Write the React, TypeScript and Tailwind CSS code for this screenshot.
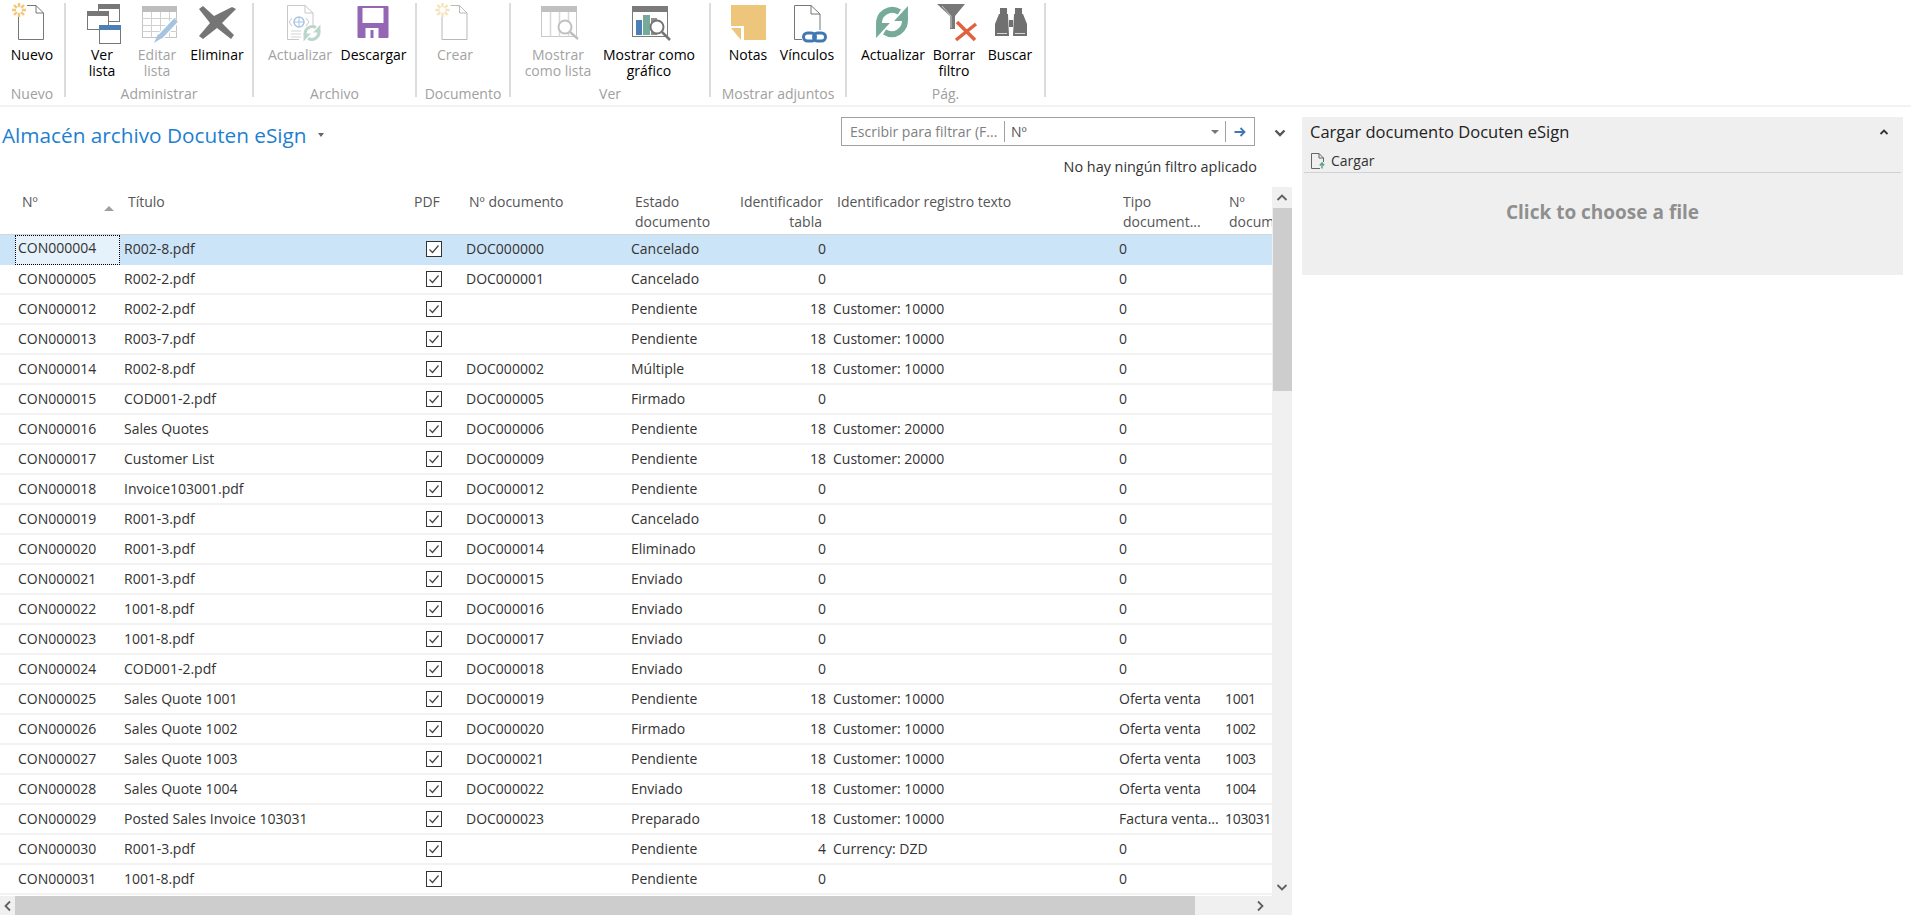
import type { ReactNode } from "react";

const rows: [string, string, string, string, string, string, string, string][] = [
  ["CON000004", "R002-8.pdf", "DOC000000", "Cancelado", "0", "", "0", ""],
  ["CON000005", "R002-2.pdf", "DOC000001", "Cancelado", "0", "", "0", ""],
  ["CON000012", "R002-2.pdf", "", "Pendiente", "18", "Customer: 10000", "0", ""],
  ["CON000013", "R003-7.pdf", "", "Pendiente", "18", "Customer: 10000", "0", ""],
  ["CON000014", "R002-8.pdf", "DOC000002", "Múltiple", "18", "Customer: 10000", "0", ""],
  ["CON000015", "COD001-2.pdf", "DOC000005", "Firmado", "0", "", "0", ""],
  ["CON000016", "Sales Quotes", "DOC000006", "Pendiente", "18", "Customer: 20000", "0", ""],
  ["CON000017", "Customer List", "DOC000009", "Pendiente", "18", "Customer: 20000", "0", ""],
  ["CON000018", "Invoice103001.pdf", "DOC000012", "Pendiente", "0", "", "0", ""],
  ["CON000019", "R001-3.pdf", "DOC000013", "Cancelado", "0", "", "0", ""],
  ["CON000020", "R001-3.pdf", "DOC000014", "Eliminado", "0", "", "0", ""],
  ["CON000021", "R001-3.pdf", "DOC000015", "Enviado", "0", "", "0", ""],
  ["CON000022", "1001-8.pdf", "DOC000016", "Enviado", "0", "", "0", ""],
  ["CON000023", "1001-8.pdf", "DOC000017", "Enviado", "0", "", "0", ""],
  ["CON000024", "COD001-2.pdf", "DOC000018", "Enviado", "0", "", "0", ""],
  ["CON000025", "Sales Quote 1001", "DOC000019", "Pendiente", "18", "Customer: 10000", "Oferta venta", "1001"],
  ["CON000026", "Sales Quote 1002", "DOC000020", "Firmado", "18", "Customer: 10000", "Oferta venta", "1002"],
  ["CON000027", "Sales Quote 1003", "DOC000021", "Pendiente", "18", "Customer: 10000", "Oferta venta", "1003"],
  ["CON000028", "Sales Quote 1004", "DOC000022", "Enviado", "18", "Customer: 10000", "Oferta venta", "1004"],
  ["CON000029", "Posted Sales Invoice 103031", "DOC000023", "Preparado", "18", "Customer: 10000", "Factura venta...", "103031"],
  ["CON000030", "R001-3.pdf", "", "Pendiente", "4", "Currency: DZD", "0", ""],
  ["CON000031", "1001-8.pdf", "", "Pendiente", "0", "", "0", ""],
];

const cols = "grid grid-cols-[120px_290px_52px_165px_113px_89px_286px_107px_50px]";

// every ribbon icon is drawn in page coordinates, the viewBox picks the window
function Sync({ cx, cy, r, color }: { cx: number; cy: number; r: number; color: string }) {
  const arm = (
    <>
      <path d="M-12 3 A12.5 12.5 0 0 1 7 -9.5" fill="none" stroke={color} strokeWidth="5.5" />
      <polygon points="15,-15 15,-1 2,-1" fill={color} />
    </>
  );
  return (
    <g transform={`translate(${cx} ${cy}) scale(${r / 16})`}>
      {arm}
      <g transform="rotate(180)">{arm}</g>
    </g>
  );
}

function NewPage({ dx = 0 }: { dx?: number }) {
  return (
    <g transform={`translate(${dx} 0)`}>
      <path d="M27 5.5 H36 L43.5 13 V39.5 H18.5 V17" fill="none" stroke="#777" strokeWidth="1" />
      <path d="M36 5.5 V13 H43.5" fill="none" stroke="#777" strokeWidth="1" />
      <path d="M19 3 V17 M12 10 H26 M14 5 L24 15 M24 5 L14 15" stroke="#f3c67a" strokeWidth="2.4" />
      <circle cx="19" cy="10" r="3" fill="#fff" />
    </g>
  );
}

function Win({ x, y, w, h, head }: { x: number; y: number; w: number; h: number; head: string }) {
  return (
    <>
      <rect x={x + 0.5} y={y + 0.5} width={w} height={h} fill="#fff" stroke="#777" />
      <rect x={x} y={y} width={w + 1} height="5" fill={head} />
    </>
  );
}

function RibbonButton({ w, label, off, children }: { w: number; label: ReactNode; off?: boolean; children: ReactNode }) {
  return (
    <div className="flex flex-col items-center shrink-0" style={{ width: w }}>
      {children}
      <div className={`mt-px text-center text-[14px] leading-4 whitespace-nowrap ${off ? "text-[#a3a3a3]" : "text-black"}`}>
        {label}
      </div>
    </div>
  );
}

function Group({ w, label, lead = 0, children }: { w: number; label: string; lead?: number; children: ReactNode }) {
  return (
    <div className="h-[94px] shrink-0 border-r-2 border-[#dcdcdc]" style={{ width: w }}>
      <div className="flex h-[83px]" style={{ paddingLeft: lead }}>
        {children}
      </div>
      <div className="text-center text-[14px] leading-4 text-[#a0a0a0] whitespace-nowrap">{label}</div>
    </div>
  );
}

const iconBox = "w-[48px] h-[43px] shrink-0 overflow-visible";

function Ribbon() {
  return (
    <div className="flex h-[107px] pt-[3px] border-b-2 border-[#f3f3f3] box-border">
      <Group w={66} label="Nuevo">
        <RibbonButton w={64} label="Nuevo">
          <svg className={iconBox} viewBox="8 3 48 43">
            <NewPage />
          </svg>
        </RibbonButton>
      </Group>
      <Group w={188} label="Administrar" lead={6}>
        <RibbonButton w={60} label={<>Ver<br />lista</>}>
          <svg className={iconBox} viewBox="78 3 48 43">
            <Win x={98} y={4} w={21} h={17} head="#777" />
            <Win x={87} y={11} w={21} h={18} head="#777" />
            <Win x={99} y={25} w={21} h={18} head="#4c7fb5" />
          </svg>
        </RibbonButton>
        <RibbonButton w={50} off label={<>Editar<br />lista</>}>
          <svg className={iconBox} viewBox="133 3 48 43">
            <rect x="142.5" y="6.5" width="34" height="31" fill="#fff" stroke="#c4c4c4" />
            <rect x="142" y="6" width="35" height="6" fill="#bdbdbd" />
            <path d="M142 18.5 H177 M142 25.5 H177 M142 31.5 H177 M151.5 12 V38 M160.5 12 V38 M169.5 12 V38" stroke="#d0d0d0" />
            <path d="M160 37 L176 20" stroke="#fff" strokeWidth="8" />
            <path d="M160 37 L176 20" stroke="#a5c4e2" strokeWidth="5" />
            <polygon points="154,43 158,34 162,38" fill="#a5c4e2" />
          </svg>
        </RibbonButton>
        <RibbonButton w={70} label="Eliminar">
          <svg className={iconBox} viewBox="193 3 48 43">
            <polygon points="199,9 203,6 214,16 232,7 236,9 222,23 234,35 231,39 217,28 203,39 199,36 210,23" fill="#757575" />
          </svg>
        </RibbonButton>
      </Group>
      <Group w={163} label="Archivo" lead={6}>
        <RibbonButton w={80} off label="Actualizar">
          <svg className={iconBox} viewBox="276 3 48 43">
            <path d="M287.5 5.5 H305 L313 13 V26 M305 5.5 V13 H313 M299 39.5 H287.5 V5.5" fill="none" stroke="#c8c8c8" />
            <circle cx="299" cy="22" r="5" fill="none" stroke="#a9c4e4" strokeWidth="1.5" />
            <path d="M294 22 H304 M299 17 V27" stroke="#a9c4e4" />
            <path d="M292 18 L289 22 L292 26 M306 18 L309 22 L306 26" fill="none" stroke="#c8c8c8" />
            <path d="M291 31 H301 M291 34 H301 M291 37 H301" stroke="#d4d4d4" />
            <Sync cx={312} cy={33} r={9} color="#bcd6cb" />
          </svg>
        </RibbonButton>
        <RibbonButton w={67} label="Descargar">
          <svg className={iconBox} viewBox="349.5 3 48 43">
            <rect x="357" y="6" width="31" height="32" rx="1" fill="#9466b4" />
            <rect x="362" y="8" width="21" height="15" fill="#fff" />
            <rect x="365" y="28" width="13" height="10" fill="#fff" />
            <rect x="370" y="30" width="3" height="8" fill="#9466b4" />
          </svg>
        </RibbonButton>
      </Group>
      <Group w={94} label="Documento">
        <RibbonButton w={76} off label="Crear">
          <svg className={`${iconBox} opacity-50`} viewBox="431 3 48 43">
            <NewPage dx={423.5} />
          </svg>
        </RibbonButton>
      </Group>
      <Group w={200} label="Ver">
        <RibbonButton w={94} off label={<>Mostrar<br />como lista</>}>
          <svg className={iconBox} viewBox="534 3 48 43">
            <rect x="541.5" y="6.5" width="35" height="30" fill="#fff" stroke="#c8c8c8" />
            <rect x="541" y="6" width="36" height="6" fill="#c0c0c0" />
            <path d="M550.5 12 V37 M559.5 12 V37 M568.5 12 V37" stroke="#d8d8d8" strokeWidth="1.5" />
            <circle cx="565" cy="27" r="6.5" fill="#fff" stroke="#c0c0c0" strokeWidth="2" />
            <path d="M570 32 L578 39" stroke="#c0c0c0" strokeWidth="2.5" />
          </svg>
        </RibbonButton>
        <RibbonButton w={88} label={<>Mostrar como<br />gráfico</>}>
          <svg className={iconBox} viewBox="625 3 48 43">
            <rect x="632.5" y="6.5" width="35" height="30" fill="#fff" stroke="#7b7b7b" />
            <rect x="632" y="6" width="36" height="6" fill="#7b7b7b" />
            <rect x="636" y="20" width="6" height="15" fill="#4c7fb5" />
            <rect x="643" y="15" width="7" height="20" fill="#75ab98" />
            <rect x="651" y="18" width="6" height="17" fill="#909090" />
            <circle cx="657" cy="27" r="6.5" fill="#fff" stroke="#757575" strokeWidth="2" />
            <path d="M662 32 L670 40" stroke="#757575" strokeWidth="2.5" />
          </svg>
        </RibbonButton>
      </Group>
      <Group w={136} label="Mostrar adjuntos" lead={9}>
        <RibbonButton w={56} label="Notas">
          <svg className={iconBox} viewBox="724 3 48 43">
            <polygon points="731,5 766,5 766,40 744,40 744,26 731,26" fill="#edc67c" />
            <path d="M731 27 H743 V40" fill="none" stroke="#fff" strokeWidth="1" />
            <polygon points="731,28 741,28 741,40" fill="#edc67c" />
          </svg>
        </RibbonButton>
        <RibbonButton w={62} label="Vínculos">
          <svg className={iconBox} viewBox="783 3 48 43">
            <path d="M794.5 39.5 V5.5 H811 L820 14 V30 M811 5.5 V14 H820 M794.5 39.5 H802" fill="none" stroke="#777" />
            <rect x="803.5" y="33" width="12" height="8" rx="4" fill="none" stroke="#3f78b3" strokeWidth="3" />
            <rect x="813.5" y="33" width="12" height="8" rx="4" fill="none" stroke="#3f78b3" strokeWidth="3" />
          </svg>
        </RibbonButton>
      </Group>
      <Group w={199} label="Pág." lead={6}>
        <RibbonButton w={80} label="Actualizar">
          <svg className={iconBox} viewBox="869 3 48 43">
            <Sync cx={892} cy={22} r={17} color="#75ab98" />
          </svg>
        </RibbonButton>
        <RibbonButton w={42} label={<>Borrar<br />filtro</>}>
          <svg className={iconBox} viewBox="930 3 48 43">
            <polygon points="937,4 965,4 955,16 955,29 950,29 950,16" fill="#787878" />
            <path d="M942 6 L951 16 V28" fill="none" stroke="#c9c9c9" />
            <path d="M957 22 L975 40 M976 24 L956 40" stroke="#e0603f" strokeWidth="3.5" />
          </svg>
        </RibbonButton>
        <RibbonButton w={70} label="Buscar">
          <svg className={iconBox} viewBox="986 3 48 43">
            <rect x="1000" y="8" width="7" height="6" fill="#707070" />
            <rect x="1015" y="8" width="7" height="6" fill="#707070" />
            <polygon points="999,14 1008,14 1009,36 995,36 995,24" fill="#707070" />
            <polygon points="1014,14 1023,14 1027,24 1027,36 1013,36" fill="#707070" />
            <rect x="1009" y="20" width="4" height="7" fill="#707070" />
            <path d="M997 33.5 H1007 M1015 33.5 H1025" stroke="#d8d8d8" />
          </svg>
        </RibbonButton>
      </Group>
    </div>
  );
}

function Checked() {
  return (
    <svg width="16" height="16" viewBox="0 0 16 16" className="block">
      <rect x="0.5" y="0.5" width="15" height="15" fill="#fff" stroke="#333" />
      <path d="M3.5 8.5 L6.5 11.5 L12.5 4.5" fill="none" stroke="#444" strokeWidth="1.2" />
    </svg>
  );
}

function Header() {
  return (
    <div className={`${cols} h-[48px] box-border border-b border-[#d6d6d6] text-[14px] leading-5 text-[#555] pt-[5px]`}>
      <div className="relative pl-[22px]">
        Nº
        <span className="absolute left-[104px] top-[14px] w-0 h-0 border-x-[5px] border-x-transparent border-b-[5px] border-b-[#a0a0a0]" />
      </div>
      <div className="pl-[8px]">Título</div>
      <div className="pl-[4px]">PDF</div>
      <div className="pl-[7px]">Nº documento</div>
      <div className="pl-[8px]">Estado<br />documento</div>
      <div className="text-right pr-[7px]">Identificador<br />tabla</div>
      <div className="pl-[8px]">Identificador registro texto</div>
      <div className="pl-[8px]">Tipo<br />document...</div>
      <div className="pl-[7px] overflow-hidden whitespace-nowrap">Nº<br />documento</div>
    </div>
  );
}

function Grid() {
  return (
    <div className="w-[1272px] shrink-0 overflow-hidden">
      <Header />
      {rows.map((r, i) => (
        <div
          key={r[0]}
          className={`${cols} h-[30px] box-border items-center text-[14px] text-[#333] ${i === 0 ? "grid-rows-[26px] bg-[#cce4f7] pb-[4px]" : "grid-rows-[26px] border-b-2 border-[#f2f2f2] pb-[2px]"}`}
        >
          {i === 0 ? (
            <div className="ml-[15px] self-start h-[30px] box-border border border-dotted border-black bg-[#e5f1fb] pl-[2px] leading-[24px]">{r[0]}</div>
          ) : (
            <div className="pl-[18px]">{r[0]}</div>
          )}
          <div className="pl-[4px] whitespace-nowrap">{r[1]}</div>
          <div className="pl-[16px] mt-[2px]">
            <Checked />
          </div>
          <div className="pl-[4px]">{r[2]}</div>
          <div className="pl-[4px]">{r[3]}</div>
          <div className="text-right pr-[3px]">{r[4]}</div>
          <div className="pl-[4px]">{r[5]}</div>
          <div className="pl-[4px] whitespace-nowrap">{r[6]}</div>
          <div className="pl-[3px] tracking-[-0.3px] overflow-hidden">{r[7]}</div>
        </div>
      ))}
    </div>
  );
}

function Arrow({ d }: { d: string }) {
  return (
    <svg width="12" height="12" viewBox="0 0 12 12">
      <path d={d} fill="none" stroke="#606060" strokeWidth="1.8" />
    </svg>
  );
}

function VScroll() {
  return (
    <div className="w-[20px] h-[709px] bg-[#f0f0f0] flex flex-col items-center">
      <div className="h-[21px] flex items-center justify-center">
        <Arrow d="M1.5 8 L6 3.5 L10.5 8" />
      </div>
      <div className="h-[183px] w-[19px] bg-[#cdcdcd]" />
      <div className="flex-1" />
      <div className="h-[21px] pt-[2px] flex items-center justify-center">
        <Arrow d="M1.5 4 L6 8.5 L10.5 4" />
      </div>
    </div>
  );
}

function HScroll() {
  return (
    <div className="w-[1292px] h-[19px] bg-[#f0f0f0] flex items-center">
      <div className="w-[15px] flex justify-center">
        <Arrow d="M8 1.5 L3.5 6 L8 10.5" />
      </div>
      <div className="w-[1180px] h-[19px] bg-[#cdcdcd]" />
      <div className="ml-[59px]">
        <Arrow d="M4 1.5 L8.5 6 L4 10.5" />
      </div>
    </div>
  );
}

function FilterBox() {
  return (
    <div className="ml-auto w-[414px] h-[29px] box-border border border-[#a0a0a0] flex items-center text-[14px]">
      <div className="w-[162px] pl-[8px] text-[#808080] whitespace-nowrap">Escribir para filtrar (F...</div>
      <div className="w-px h-[21px] bg-[#a0a0a0]" />
      <div className="flex-1 pl-[6px] text-[#555]">Nº</div>
      <span className="w-0 h-0 border-x-[4px] border-x-transparent border-t-[4px] border-t-[#777]" />
      <div className="ml-[6px] w-px h-[21px] bg-[#a0a0a0]" />
      <div className="w-[28px] flex justify-center">
        <svg width="12" height="10" viewBox="0 0 12 10">
          <path d="M0.5 5 H10 M6.5 1 L10.5 5 L6.5 9" fill="none" stroke="#3f78b3" strokeWidth="1.8" />
        </svg>
      </div>
    </div>
  );
}

function UploadPanel() {
  return (
    <div className="ml-[10px] mt-[10px] w-[601px] h-[158px] bg-[#efefef] flex flex-col">
      <div className="flex items-center pt-[3px] pl-[8px] pr-[14px] text-[16.5px] leading-6 text-[#222]">
        <span className="whitespace-nowrap">Cargar documento Docuten eSign</span>
        <svg className="ml-auto" width="10" height="8" viewBox="0 0 10 8">
          <path d="M1.5 6 L5 2.5 L8.5 6" fill="none" stroke="#333" strokeWidth="1.8" />
        </svg>
      </div>
      <div className="flex items-center mt-[9px] pl-[9px] h-[15px] text-[14px] text-[#333]">
        <svg width="14" height="16" viewBox="0 0 14 16" className="shrink-0">
          <path d="M9 15.5 H0.5 V0.5 H8 L12.5 5 V9 M8 0.5 V5 H12.5" fill="none" stroke="#666" />
          <path d="M11 15.5 V10.5 M8.8 12.5 L11 10 L13.2 12.5" fill="none" stroke="#5aa58c" strokeWidth="1.5" />
        </svg>
        <span className="ml-[6px]">Cargar</span>
      </div>
      <div className="mx-[2px] mt-[4px] h-px bg-[#d2d2d2]" />
      <div className="pt-[27px] text-center text-[19px] leading-6 font-bold text-[#8f8f8f]">Click to choose a file</div>
    </div>
  );
}

export default function App() {
  return (
    <div className="w-[1911px] h-[923px] bg-white overflow-hidden font-['Open_Sans',sans-serif]">
      <Ribbon />
      <div className="flex">
        <div className="w-[1292px] shrink-0">
          <div className="flex items-center h-[29px] mt-[10px] pr-[6px]">
            <span className="pl-[2px] mt-[7px] text-[20.75px] leading-7 text-[#1e7fd0] whitespace-nowrap">
              Almacén archivo Docuten eSign
            </span>
            <span className="ml-[11px] mt-[6px] w-0 h-0 border-x-[3.5px] border-x-transparent border-t-[4px] border-t-[#666]" />
            <FilterBox />
            <svg className="ml-[19px] mt-[4px]" width="12" height="9" viewBox="0 0 12 9">
              <path d="M1.5 1.5 L6 6 L10.5 1.5" fill="none" stroke="#555" strokeWidth="2.4" />
            </svg>
          </div>
          <div className="h-[41px] pr-[35px] flex items-center justify-end text-[14.4px] text-[#333]">
            No hay ningún filtro aplicado
          </div>
          <div className="flex">
            <Grid />
            <VScroll />
          </div>
          <HScroll />
        </div>
        <UploadPanel />
      </div>
    </div>
  );
}
